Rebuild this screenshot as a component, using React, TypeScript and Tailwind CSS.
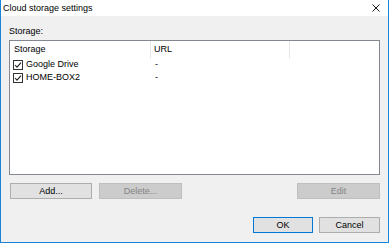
import React, { ReactElement } from 'react'

const font = { fontFamily: '"Liberation Sans", Arial, sans-serif' }

const CheckBox: React.FC = (): ReactElement => (
    <svg width="10" height="10" viewBox="0 0 10 10" className="shrink-0">
        <rect x="0.5" y="0.5" width="9" height="9" fill="#fff" stroke="#333" />
        <path d="M2 5 L4 7.2 L8 2.6" fill="none" stroke="#222" strokeWidth="1.1" />
    </svg>
)

const Button: React.FC<{ label: string; w: string; disabled?: boolean; def?: boolean }> = ({ label, w, disabled, def }): ReactElement => {
    const cls = disabled
        ? 'bg-[#cccccc] border-[#bfbfbf] text-[#838383]'
        : def
            ? 'bg-[#e1e1e1] border-[#0078d7] text-black'
            : 'bg-[#e1e1e1] border-[#adadad] text-black'
    return <div className={`${w} h-[16px] border flex items-center justify-center text-[9px] leading-none ${cls}`}>
        {label}
    </div>
}

const rows = [
    { name: 'Google Drive', url: '-' },
    { name: 'HOME-BOX2', url: '-' },
]

const App: React.FC = (): ReactElement => {
    return <div className="w-[389px] h-[243px] flex flex-col bg-[#f0f0f0] border-x border-b border-[#1883d7] text-black" style={font}>
        {/* title bar */}
        <div className="h-[17px] bg-white flex items-center pl-[2px] pr-[8px]">
            <span className="text-[9px] leading-none">Cloud storage settings</span>
            <div className="flex-1" />
            <svg width="8" height="8" viewBox="0 0 8 8">
                <path d="M0.5 0.5 L7.5 7.5 M7.5 0.5 L0.5 7.5" stroke="#111" strokeWidth="1" />
            </svg>
        </div>

        <div className="flex-1 flex flex-col px-[8px] pt-[10px] pb-[9px]">
            <div className="text-[9px] leading-[11px]">Storage:</div>

            {/* list view */}
            <div className="mt-[3px] h-[135px] bg-white border border-[#828790] flex flex-col">
                <div className="h-[17px] flex text-[9px]">
                    <div className="w-[141px] pl-[4px] flex items-center border-r border-[#e5e5e5]">Storage</div>
                    <div className="w-[139px] pl-[3px] flex items-center border-r border-[#e5e5e5]">URL</div>
                    <div className="flex-1" />
                </div>
                {rows.map(r => (
                    <div key={r.name} className="h-[12px] flex items-center text-[9px] mt-[1px]">
                        <div className="w-[141px] pl-[3px] flex items-center gap-[3px]">
                            <CheckBox />
                            <span>{r.name}</span>
                        </div>
                        <div className="pl-[4px]">{r.url}</div>
                    </div>
                ))}
            </div>

            <div className="mt-[8px] flex items-center pl-[1px]">
                <Button label="Add..." w="w-[82px]" />
                <div className="w-[7px]" />
                <Button label="Delete..." w="w-[83px]" disabled />
                <div className="flex-1" />
                <Button label="Edit" w="w-[83px]" disabled />
            </div>

            <div className="mt-[18px] flex items-center justify-end">
                <Button label="OK" w="w-[60px]" def />
                <div className="w-[6px]" />
                <Button label="Cancel" w="w-[61px]" />
            </div>
        </div>
    </div>
}

export default App
